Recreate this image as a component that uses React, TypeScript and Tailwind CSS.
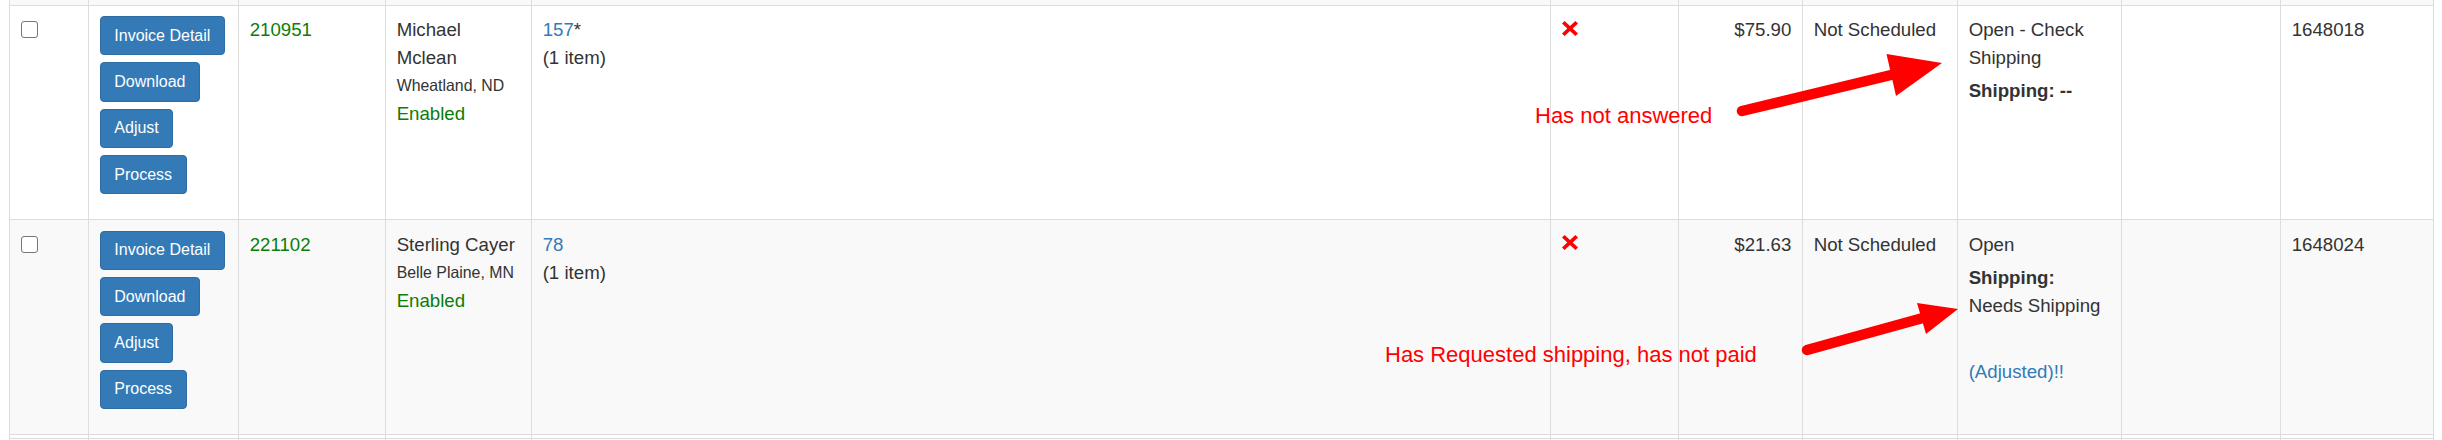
import React from 'react';

type Order = {
  invoice: string;
  name: string;
  place: string;
  items: string;
  star: boolean;
  total: string;
  status: React.ReactNode;
  ref: string;
  bg: string;
};

const cell = 'border border-[#ddd] align-top p-[10.67px]';

function RemoveIcon() {
  return (
    <svg width="16" height="15" viewBox="0 0 16 15" className="block mt-[4.5px]">
      <polygon
        fill="#ff0000"
        points="0,2.6 2.6,0 8,5.1 13.4,0 16,2.6 10.7,7.5 16,12.4 13.4,15 8,9.9 2.6,15 0,12.4 5.3,7.5"
      />
    </svg>
  );
}

function ActionButtons() {
  const labels = ['Invoice Detail', 'Download', 'Adjust', 'Process'];
  return (
    <div className="flex flex-col items-start gap-[7px] pb-[14px]">
      {labels.map((label) => (
        <button
          key={label}
          type="button"
          className="bg-[#337ab7] border border-[#2e6da4] text-white text-[16px] leading-[24px] px-[13.67px] py-[6.67px] rounded-[4px] whitespace-nowrap"
        >
          {label}
        </button>
      ))}
    </div>
  );
}

const orders: Order[] = [
  {
    invoice: '210951',
    name: 'Michael Mclean',
    place: 'Wheatland, ND',
    items: '157',
    star: true,
    total: '$75.90',
    ref: '1648018',
    bg: 'bg-white',
    status: (
      <>
        <div>Open - Check Shipping</div>
        <div className="mt-[5px] font-bold">Shipping: --</div>
      </>
    ),
  },
  {
    invoice: '221102',
    name: 'Sterling Cayer',
    place: 'Belle Plaine, MN',
    items: '78',
    star: false,
    total: '$21.63',
    ref: '1648024',
    bg: 'bg-[#f9f9f9]',
    status: (
      <>
        <div>Open</div>
        <div className="mt-[5px] font-bold">Shipping:</div>
        <div>Needs Shipping</div>
        <div className="mt-[38px] text-[#337ab7]">(Adjusted)!!</div>
      </>
    ),
  },
];

export default function App() {
  const cols = [79, 150, 147, 146, 1019, 128, 124, 155, 164, 159, 153];

  return (
    <div className="relative w-[2442px] h-[440px] overflow-hidden bg-white font-['Liberation_Sans',Arial,sans-serif] text-[18.67px] leading-[28px] text-[#333]">
      <table className="ml-[9px] table-fixed border-collapse w-[2424px]">
        <colgroup>
          {cols.map((w, i) => (
            <col key={i} style={{ width: w }} />
          ))}
        </colgroup>
        <tbody>
          <tr className="bg-[#f9f9f9]">
            {cols.map((_, i) => (
              <td key={i} className="border-x border-b border-[#ddd] p-0 h-[5px]" />
            ))}
          </tr>

          {orders.map((o) => (
            <tr key={o.invoice} className={o.bg}>
              <td className={cell}>
                <input
                  type="checkbox"
                  readOnly
                  className="block appearance-none mt-[5.3px] w-[17px] h-[17px] rounded-[3px] border-[1.5px] border-[#767676] bg-white"
                />
              </td>
              <td className={cell}>
                <ActionButtons />
              </td>
              <td className={cell}>
                <span className="text-[#0a7d0a]">{o.invoice}</span>
              </td>
              <td className={cell}>
                <div>{o.name}</div>
                <div className="text-[15.87px]">{o.place}</div>
                <div className="text-[#0a7d0a]">Enabled</div>
              </td>
              <td className={cell}>
                <div>
                  <a className="text-[#337ab7]">{o.items}</a>
                  {o.star ? '*' : ''}
                </div>
                <div>(1 item)</div>
              </td>
              <td className={cell}>
                <RemoveIcon />
              </td>
              <td className={cell + ' text-right'}>{o.total}</td>
              <td className={cell}>Not Scheduled</td>
              <td className={cell}>{o.status}</td>
              <td className={cell}></td>
              <td className={cell}>{o.ref}</td>
            </tr>
          ))}

          <tr className="bg-white">
            {cols.map((_, i) => (
              <td key={i} className="border-x border-t border-[#ddd] p-0 h-[6px] align-top">
                <div className="mt-[3px] border-t border-[#ddd]" />
              </td>
            ))}
          </tr>
        </tbody>
      </table>

      {/* annotations drawn over the table */}
      <div className="absolute left-[1535px] top-[105.4px] text-[22px] leading-[22px] text-[#ff0000] whitespace-nowrap">
        Has not answered
      </div>
      <div className="absolute left-[1385px] top-[344px] text-[22px] leading-[22px] text-[#ff0000] whitespace-nowrap">
        Has Requested shipping, has not paid
      </div>
      <svg className="absolute left-0 top-0 pointer-events-none" width="2442" height="440">
        <line x1="1742" y1="111" x2="1891" y2="75" stroke="#ff0000" strokeWidth="10.5" strokeLinecap="round" />
        <polygon points="1886.5,54 1942,63 1896,96" fill="#ff0000" />
        <line x1="1807" y1="350" x2="1921" y2="318.5" stroke="#ff0000" strokeWidth="10.5" strokeLinecap="round" />
        <polygon points="1917,303 1958,309 1926,334" fill="#ff0000" />
      </svg>
    </div>
  );
}
